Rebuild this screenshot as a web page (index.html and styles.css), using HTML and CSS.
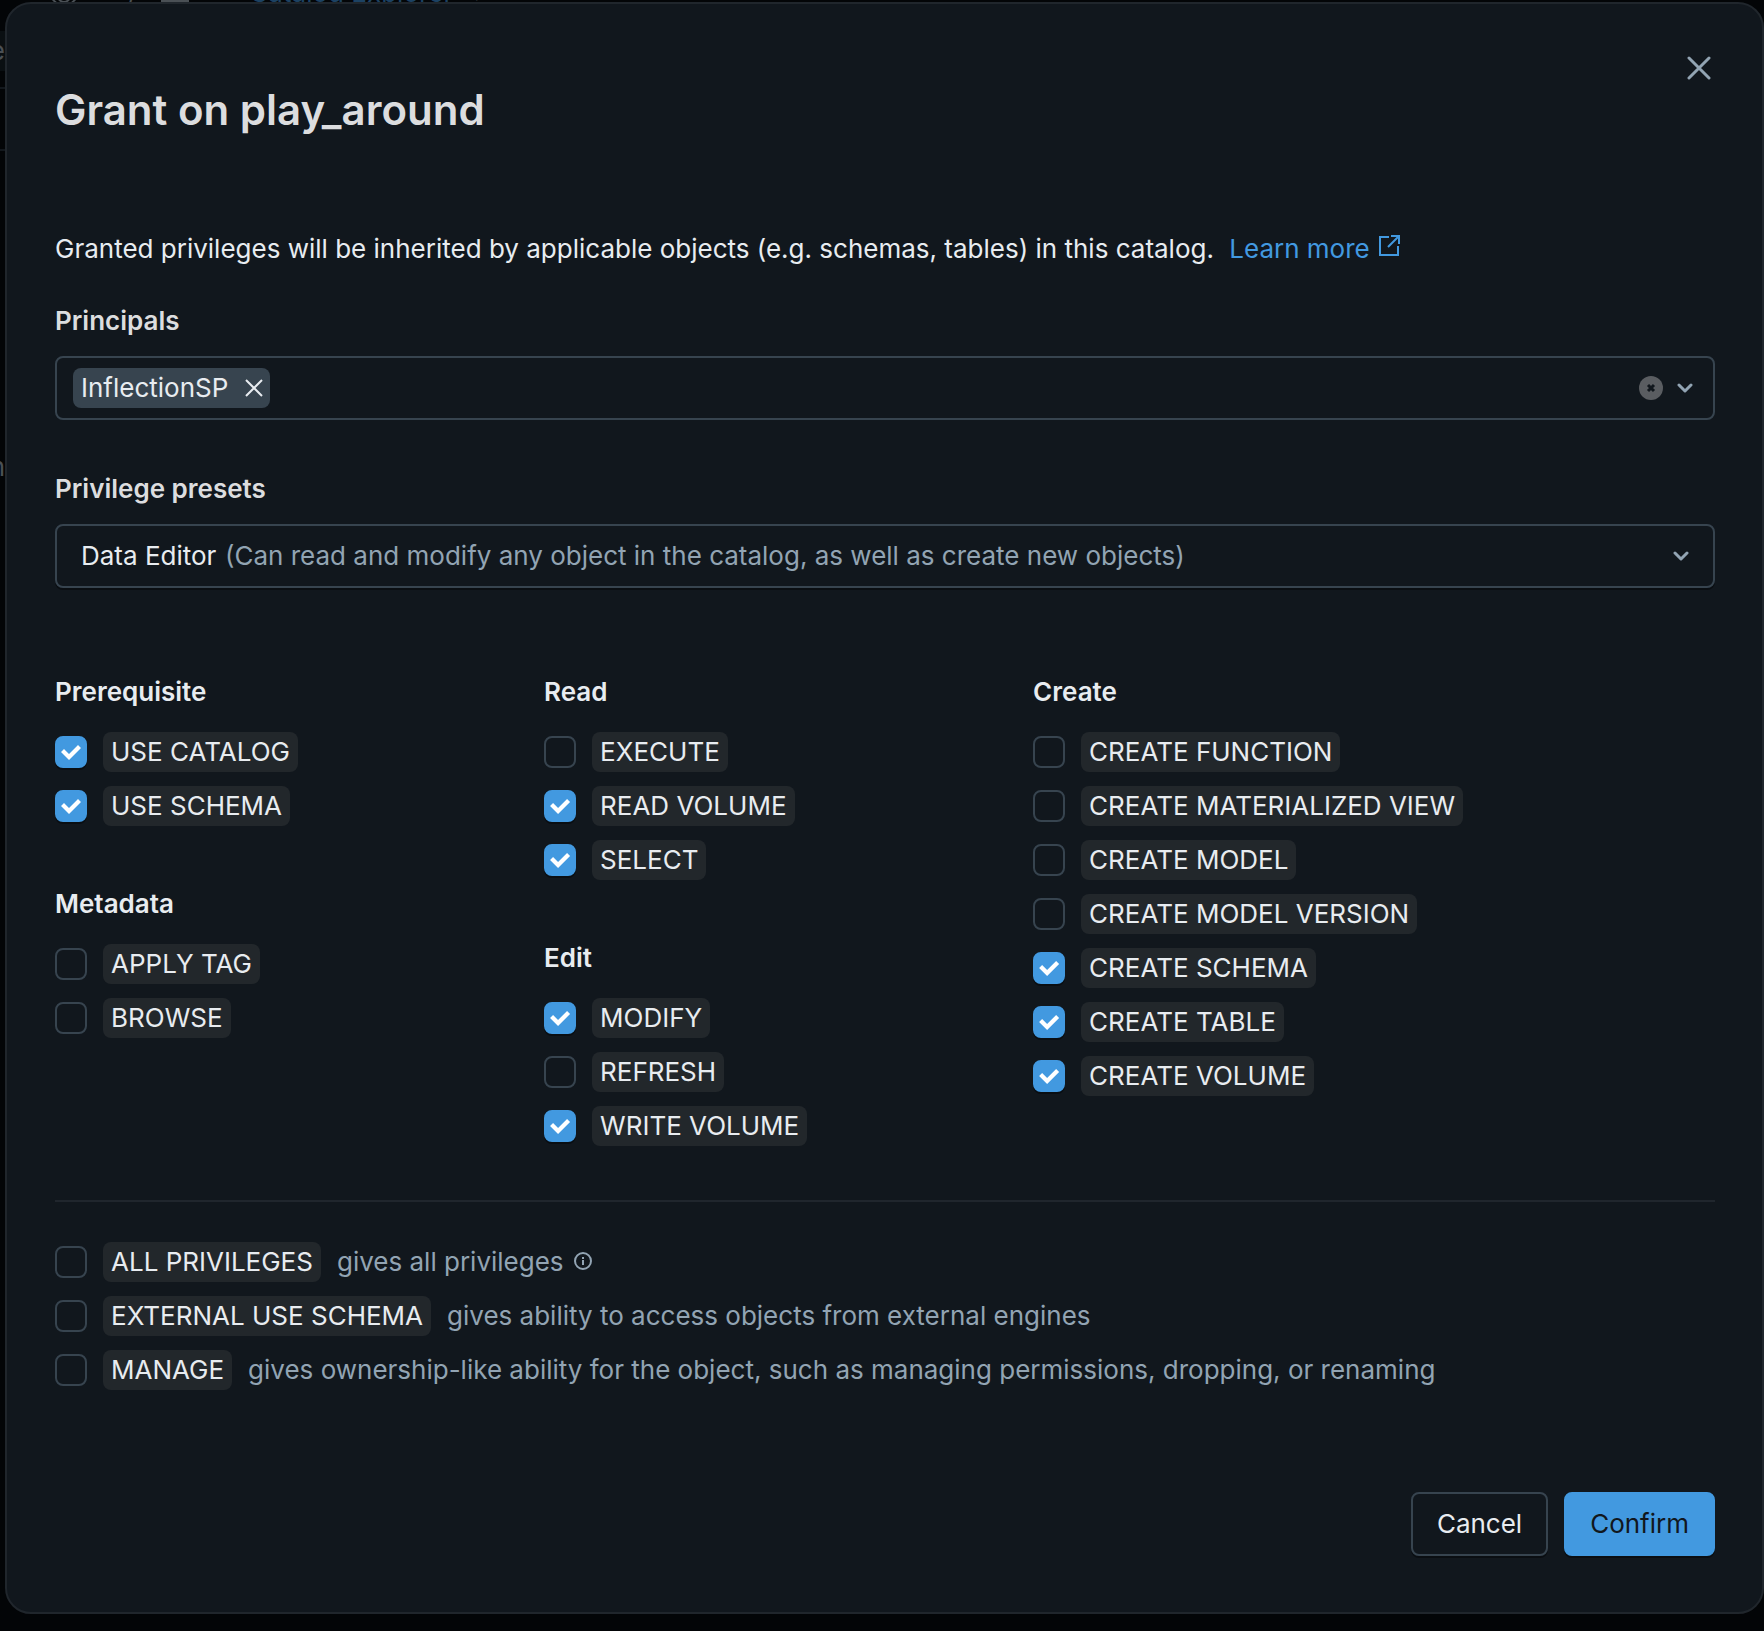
FILE: index.html
```html
<!DOCTYPE html>
<html lang="en">
<head>
    <meta charset="UTF-8">
    <meta name="viewport" content="width=device-width, initial-scale=1.0">
    <title>Grant on play_around</title>
    <link rel="stylesheet" href="styles.css">
</head>
<body>
    <!-- page behind the dialog -->
    <div class="backdrop" aria-hidden="true">
        <div class="crumbs">
            <svg width="32" height="32" viewBox="0 0 32 32"><circle cx="16" cy="14" r="14"/><circle cx="16" cy="19" r="6"/></svg>
            <span class="slash">/</span>
            <svg width="28" height="28" viewBox="0 0 28 28"><path d="M0 22h28M14 10v14"/></svg>
            <span class="crumb-link">Catalog Explorer</span>
            <span>&gt;</span>
        </div>
        <div class="sidebar">
            <span class="side-item active">e</span>
            <span class="side-line"></span>
            <span class="side-line"></span>
            <span class="side-item last">h</span>
        </div>
    </div>

    <div class="dialog" role="dialog" aria-labelledby="dialogTitle">
        <header class="dialog-header">
            <h1 id="dialogTitle">Grant on play_around</h1>
            <button class="close-button" type="button" aria-label="Close">
                <svg width="24" height="24" viewBox="0 0 24 24"><path d="M2 2l20 20M22 2L2 22"/></svg>
            </button>
        </header>

        <form class="grant-form">
            <p class="intro">
                Granted privileges will be inherited by applicable objects (e.g. schemas, tables) in this catalog.
                <a class="learn-more" href="#">Learn more
                    <svg width="24" height="24" viewBox="0 0 24 24"><path d="M12 3H3v18h18v-9"/><path d="M14 2h8v8M21 3l-10 10"/></svg>
                </a>
            </p>

            <label class="field-label" for="principals">Principals</label>
            <div class="field principals">
                <span class="tag">InflectionSP
                    <button class="tag-remove" type="button" aria-label="Remove InflectionSP">
                        <svg width="20" height="20" viewBox="0 0 20 20"><path d="M2 2l16 16M18 2L2 18"/></svg>
                    </button>
                </span>
                <input class="search" id="principals" type="text">
                <button class="clear-button" type="button" aria-label="Clear all">
                    <svg width="24" height="24" viewBox="0 0 24 24"><circle cx="12" cy="12" r="12"/><path d="M9 9l6 6M15 9l-6 6"/></svg>
                </button>
                <svg class="chevron" width="16" height="12" viewBox="0 0 16 12"><path d="M2 3l6 6 6-6"/></svg>
            </div>

            <label class="field-label" for="preset">Privilege presets</label>
            <div class="field preset">
                <select id="preset">
                    <option selected>Data Editor</option>
                    <option>Custom</option>
                </select>
                <span class="hint">(Can read and modify any object in the catalog, as well as create new objects)</span>
                <svg class="chevron" width="16" height="12" viewBox="0 0 16 12"><path d="M2 3l6 6 6-6"/></svg>
            </div>

            <div class="privileges">
                <div class="column">
                    <fieldset class="group">
                        <legend>Prerequisite</legend>
                        <label class="option"><input type="checkbox" checked><span class="chip">USE CATALOG</span></label>
                        <label class="option"><input type="checkbox" checked><span class="chip">USE SCHEMA</span></label>
                    </fieldset>
                    <fieldset class="group">
                        <legend>Metadata</legend>
                        <label class="option"><input type="checkbox"><span class="chip">APPLY TAG</span></label>
                        <label class="option"><input type="checkbox"><span class="chip">BROWSE</span></label>
                    </fieldset>
                </div>
                <div class="column">
                    <fieldset class="group">
                        <legend>Read</legend>
                        <label class="option"><input type="checkbox"><span class="chip">EXECUTE</span></label>
                        <label class="option"><input type="checkbox" checked><span class="chip">READ VOLUME</span></label>
                        <label class="option"><input type="checkbox" checked><span class="chip">SELECT</span></label>
                    </fieldset>
                    <fieldset class="group">
                        <legend>Edit</legend>
                        <label class="option"><input type="checkbox" checked><span class="chip">MODIFY</span></label>
                        <label class="option"><input type="checkbox"><span class="chip">REFRESH</span></label>
                        <label class="option"><input type="checkbox" checked><span class="chip">WRITE VOLUME</span></label>
                    </fieldset>
                </div>
                <div class="column">
                    <fieldset class="group">
                        <legend>Create</legend>
                        <label class="option"><input type="checkbox"><span class="chip">CREATE FUNCTION</span></label>
                        <label class="option"><input type="checkbox"><span class="chip">CREATE MATERIALIZED VIEW</span></label>
                        <label class="option"><input type="checkbox"><span class="chip">CREATE MODEL</span></label>
                        <label class="option"><input type="checkbox"><span class="chip">CREATE MODEL VERSION</span></label>
                        <label class="option"><input type="checkbox" checked><span class="chip">CREATE SCHEMA</span></label>
                        <label class="option"><input type="checkbox" checked><span class="chip">CREATE TABLE</span></label>
                        <label class="option"><input type="checkbox" checked><span class="chip">CREATE VOLUME</span></label>
                    </fieldset>
                </div>
            </div>

            <div class="special">
                <label class="option">
                    <input type="checkbox"><span class="chip">ALL PRIVILEGES</span>
                    <span class="hint">gives all privileges
                        <svg class="info" width="20" height="20" viewBox="0 0 20 20"><circle cx="10" cy="10" r="8"/><path d="M10 9v5M10 6v2"/></svg>
                    </span>
                </label>
                <label class="option">
                    <input type="checkbox"><span class="chip">EXTERNAL USE SCHEMA</span>
                    <span class="hint">gives ability to access objects from external engines</span>
                </label>
                <label class="option">
                    <input type="checkbox"><span class="chip">MANAGE</span>
                    <span class="hint">gives ownership-like ability for the object, such as managing permissions, dropping, or renaming</span>
                </label>
            </div>

            <footer class="actions">
                <button class="button" type="button">Cancel</button>
                <button class="button primary" type="submit">Confirm</button>
            </footer>
        </form>
    </div>
</body>
</html>
```
FILE: styles.css
```css
* {
    box-sizing: border-box;
}
body {
    margin: 0;
    background-color: #030507;
    color: #e8ecf0;
    font-family: Inter, "Liberation Sans", sans-serif;
    font-size: 26px;
    line-height: 40px;
}
button, input, select {
    font: inherit;
    color: inherit;
}
button {
    cursor: pointer;
}
svg {
    fill: none;
    stroke: currentColor;
    stroke-width: 2;
    flex-shrink: 0;
}

/* page behind the dialog */
.backdrop {
    position: absolute;
    inset: 0;
    overflow: hidden;
    color: #4a5055;
}
.crumbs {
    display: flex;
    align-items: center;
    margin-top: -27px;
    padding-left: 48px;
}
.crumbs .slash {
    margin: 0 24px 0 48px;
}
.crumb-link {
    margin: 0 20px 0 60px;
    color: #1c4263;
}
.sidebar {
    width: 5px;
    padding-top: 18px;
}
.side-item {
    display: flex;
    justify-content: flex-end;
    background-color: #0a0f12;
}
.side-item.last {
    margin-top: 296px;
    background: none;
}
.side-line {
    display: block;
    margin-top: 16px;
    height: 2px;
    background-color: #13181d;
}
.side-line + .side-line {
    margin-top: 60px;
}

.dialog {
    position: relative;
    margin: 2px 0 17px 5px;
    padding: 48px 47px 56px 48px;
    background-color: #11171d;
    border: 2px solid #20262c;
    border-radius: 26px;
}
.dialog-header {
    display: flex;
    justify-content: space-between;
    align-items: flex-start;
}
h1 {
    margin: 30px 0 91px;
    color: #dcdddf;
    font-size: 42px;
    font-weight: 600;
    line-height: 56px;
}
.close-button {
    display: flex;
    padding: 4px;
    background: none;
    border: none;
    color: #92a4b3;
}
.close-button svg {
    stroke-width: 3;
    stroke-linecap: round;
}

.intro {
    margin: 0 0 32px;
}
.learn-more {
    margin-left: 8px;
    color: #4299e0;
    text-decoration: none;
}
.field-label {
    display: block;
    width: fit-content;
    margin-bottom: 15px;
    color: #dcdddf;
    font-weight: 600;
}
.field {
    display: flex;
    align-items: center;
    height: 64px;
    border: 2px solid #37444f;
    border-radius: 8px;
}
.principals {
    margin-bottom: 49px;
    padding: 0 20px 0 16px;
}
.tag {
    display: flex;
    align-items: center;
    gap: 16px;
    padding: 0 6px 0 8px;
    background-color: #37444f;
    border-radius: 8px;
}
.tag-remove, .clear-button {
    display: flex;
    padding: 0;
    background: none;
    border: none;
}
.search {
    flex: 1;
    min-width: 0;
    background: none;
    border: none;
    outline: none;
}
.clear-button {
    margin-right: 14px;
}
.clear-button circle {
    fill: #5a5d61;
    stroke: none;
}
.clear-button path {
    stroke: #11171d;
    stroke-width: 3;
}
.chevron {
    color: #92a4b3;
    stroke-width: 3;
    stroke-linecap: round;
    stroke-linejoin: round;
}
.preset {
    gap: 8px;
    padding: 0 24px;
    box-shadow: 0 2px 0 #0a0e12;
}
.preset select {
    appearance: none;
    padding: 0;
    background: none;
    border: none;
    outline: none;
}
.preset .chevron {
    margin-left: auto;
}
.hint {
    color: #92a4b3;
}

.privileges {
    display: grid;
    grid-template-columns: 5fr 5fr 7fr;
    column-gap: 2px;
    padding: 84px 0 54px;
    border-bottom: 2px solid #20262d;
}
.column {
    display: flex;
    flex-direction: column;
    gap: 58px;
}
.group {
    display: flex;
    flex-direction: column;
    gap: 14px;
    margin: 0;
    padding: 0;
    border: none;
}
legend {
    margin-bottom: 20px;
    padding: 0;
    font-weight: 600;
}
.option {
    display: flex;
    align-items: center;
    gap: 16px;
    width: fit-content;
}
.option input {
    appearance: none;
    flex-shrink: 0;
    width: 32px;
    height: 32px;
    margin: 0;
    border: 2px solid #37444f;
    border-radius: 8px;
}
.option input:checked {
    display: grid;
    place-items: center;
    background-color: #4299e0;
    border-color: #4299e0;
    box-shadow: 0 2px 0 #0a0e12;
}
.option input:checked::before {
    content: "";
    width: 20px;
    height: 16px;
    background-color: #fff;
    clip-path: polygon(0 8px, 3px 5px, 8px 10px, 17px 1px, 20px 4px, 8px 16px);
}
.chip {
    padding: 0 8px;
    background-color: #22272b;
    border-radius: 8px;
}
.special {
    display: flex;
    flex-direction: column;
    gap: 14px;
    padding: 40px 0 102px;
}
.info {
    margin-left: 2px;
}

.actions {
    display: flex;
    justify-content: flex-end;
    gap: 16px;
}
.button {
    height: 64px;
    padding: 0 24px;
    background: none;
    border: 2px solid #37444f;
    border-radius: 8px;
    box-shadow: 0 2px 0 #0a0e12;
}
.button.primary {
    background-color: #4299e0;
    border-color: #4299e0;
    color: #11171d;
}
```
